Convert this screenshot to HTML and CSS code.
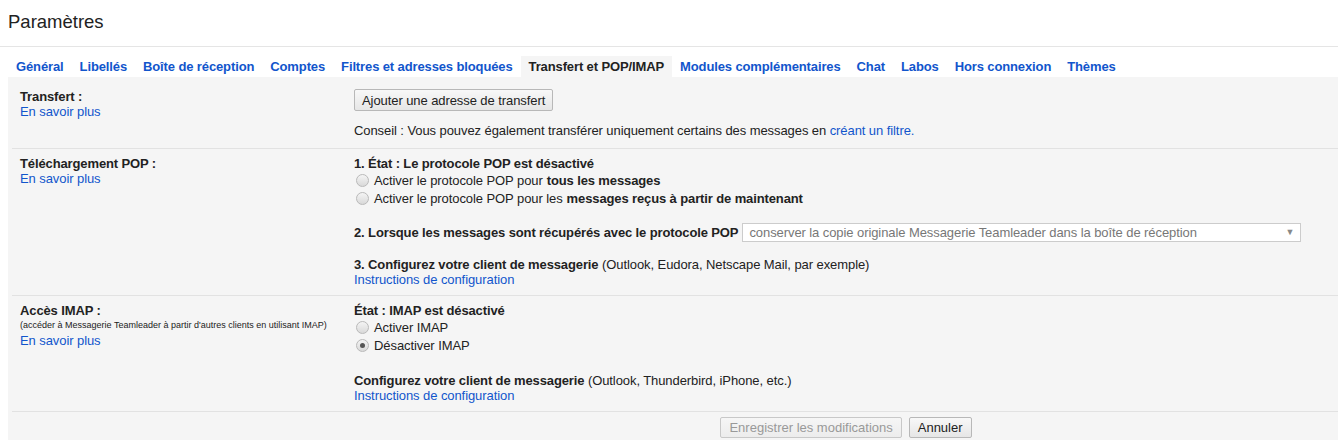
FILE: index.html
```html
<!DOCTYPE html>
<html lang="fr">
<head>
  <meta charset="UTF-8">
  <title>Paramètres</title>
  <link rel="stylesheet" href="styles.css">
</head>
<body>
  <div class="header">
    <h1 class="title">Paramètres</h1>
  </div>

  <div class="settings">
    <div class="tabs">
      <a class="tab" href="#">Général</a>
      <a class="tab" href="#">Libellés</a>
      <a class="tab" href="#">Boîte de réception</a>
      <a class="tab" href="#">Comptes</a>
      <a class="tab" href="#">Filtres et adresses bloquées</a>
      <span class="tab tab-active">Transfert et POP/IMAP</span>
      <a class="tab" href="#">Modules complémentaires</a>
      <a class="tab" href="#">Chat</a>
      <a class="tab" href="#">Labos</a>
      <a class="tab" href="#">Hors connexion</a>
      <a class="tab" href="#">Thèmes</a>
    </div>

    <div class="panel">
      <!-- Transfert -->
      <div class="row row-first">
        <div class="label">
          <b>Transfert :</b>
          <a href="#">En savoir plus</a>
        </div>
        <div class="value">
          <button class="btn">Ajouter une adresse de transfert</button>
          <div class="hint">Conseil : Vous pouvez également transférer uniquement certains des messages en <a href="#">créant un filtre.</a></div>
        </div>
      </div>

      <!-- POP -->
      <div class="row">
        <div class="label">
          <b>Téléchargement POP :</b>
          <a href="#">En savoir plus</a>
        </div>
        <div class="value">
          <div class="line"><b>1. État : Le protocole POP est désactivé</b></div>
          <div class="radio-line"><span class="radio"></span>Activer le protocole POP pour <b>tous les messages</b></div>
          <div class="radio-line"><span class="radio"></span>Activer le protocole POP pour les <b>messages reçus à partir de maintenant</b></div>
          <div class="select-line">
            <b>2. Lorsque les messages sont récupérés avec le protocole POP</b>
            <div class="select">
              <span>conserver la copie originale Messagerie Teamleader dans la boîte de réception</span>
              <span class="select-arrow">▼</span>
            </div>
          </div>
          <div class="line"><b>3. Configurez votre client de messagerie</b> (Outlook, Eudora, Netscape Mail, par exemple)</div>
          <div class="line"><a href="#">Instructions de configuration</a></div>
        </div>
      </div>

      <!-- IMAP -->
      <div class="row">
        <div class="label">
          <b>Accès IMAP :</b>
          <small>(accéder à Messagerie Teamleader à partir d'autres clients en utilisant IMAP)</small>
          <a href="#">En savoir plus</a>
        </div>
        <div class="value">
          <div class="line"><b>État : IMAP est désactivé</b></div>
          <div class="radio-line"><span class="radio"></span>Activer IMAP</div>
          <div class="radio-line"><span class="radio checked"></span>Désactiver IMAP</div>
          <div class="line gap"><b>Configurez votre client de messagerie</b> (Outlook, Thunderbird, iPhone, etc.)</div>
          <div class="line"><a href="#">Instructions de configuration</a></div>
        </div>
      </div>

      <div class="actions">
        <button class="btn" disabled>Enregistrer les modifications</button>
        <button class="btn">Annuler</button>
      </div>
    </div>
  </div>
</body>
</html>
```

FILE: styles.css
```css
/* Paramètres - Transfert et POP/IMAP */
body {
  margin: 0;
  font-family: Arial, "Liberation Sans", sans-serif;
  font-size: 13px;
  line-height: 15px;
  letter-spacing: -0.08px;
  color: #222;
  background: #fff;
  overflow: hidden;
}
b {
  letter-spacing: -0.12px;
}
a {
  color: #15c;
  text-decoration: none;
}
.header {
  height: 46px;
  border-bottom: 1px solid #e5e5e5;
}
.title {
  margin: 0;
  padding: 11px 8px 0;
  font-size: 18.5px;
  line-height: 22px;
  font-weight: normal;
  letter-spacing: 0;
  color: #222;
}
.settings {
  margin-left: 8px;
}
.tabs {
  display: flex;
  margin-top: 9px;
  height: 21px;
}
.tab {
  padding: 0 8px;
  line-height: 21px;
  font-weight: bold;
  letter-spacing: -0.12px;
  color: #15c;
  white-space: nowrap;
}
.tab-active {
  background-color: #f5f5f5;
  color: #222;
}
.panel {
  background-color: #f5f5f5;
  padding-top: 4px;
}
.row {
  display: grid;
  grid-template-columns: 342px 1fr;
  margin-left: 4px;
  padding: 7px 0 8px;
  border-bottom: 1px solid #e2e2e2;
}
.row-first {
  padding: 8px 0 10px;
}
.label {
  display: flex;
  flex-direction: column;
  align-items: flex-start;
  padding-left: 8px;
}
.label small {
  font-size: 9px;
  line-height: 15px;
  letter-spacing: 0;
  white-space: nowrap;
}
.value {
  display: flex;
  flex-direction: column;
  align-items: flex-start;
}
.btn {
  font-family: inherit;
  font-size: 13px;
  letter-spacing: 0;
  color: #222;
  height: 21px;
  padding: 0 8px;
  border: 1px solid #b8b8b8;
  border-radius: 2px;
  background: linear-gradient(#f8f8f8, #e6e6e6);
  cursor: pointer;
}
.btn:disabled {
  color: #999;
  border-color: #c8c8c8;
  background: linear-gradient(#f6f6f6, #ececec);
  cursor: default;
}
.row-first .btn {
  height: 22px;
  padding: 0 7px;
  letter-spacing: -0.08px;
}
.hint {
  margin-top: 12px;
}
.line.gap {
  margin-top: 19px;
}
.radio-line {
  display: flex;
  align-items: center;
  height: 18px;
  white-space: nowrap;
}
.radio-line b {
  margin-left: 4px;
}
.radio {
  position: relative;
  width: 11px;
  height: 11px;
  margin: 0 5px 0 2px;
  border: 1px solid #b9b9b9;
  border-radius: 50%;
  background: linear-gradient(#f4f4f4, #d9d9d9);
}
.radio.checked::after {
  content: "";
  position: absolute;
  left: 3px;
  top: 3px;
  width: 5px;
  height: 5px;
  border-radius: 50%;
  background: #555;
}
.select-line {
  display: flex;
  align-items: center;
  margin: 16px 0 15px;
  height: 19px;
}
.select {
  display: flex;
  justify-content: space-between;
  align-items: center;
  box-sizing: border-box;
  width: 559px;
  height: 19px;
  margin-left: 4px;
  padding: 0 6px;
  border: 1px solid #ccc;
  background: #fff;
  color: #777;
  white-space: nowrap;
}
.select-arrow {
  font-size: 9px;
  color: #888;
}
.actions {
  display: flex;
  justify-content: center;
  gap: 7px;
  margin-left: 346px;
  padding: 5px 0 2px;
}
```
